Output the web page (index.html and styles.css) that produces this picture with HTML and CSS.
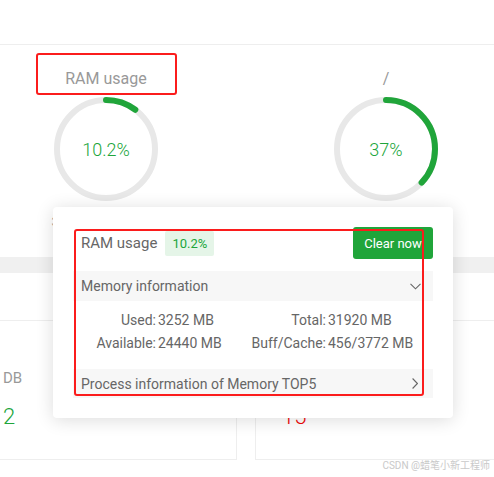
FILE: index.html
```html
<!DOCTYPE html>
<html lang="en">
<head>
<meta charset="utf-8">
<title>RAM usage</title>
<link rel="stylesheet" href="styles.css">
</head>
<body>
<div class="page">
  <div class="topbar"></div>

  <section class="gauges">
    <div class="gauge">
      <div class="gauge-title gauge-title--marked">RAM usage</div>
      <div class="ring">
        <svg class="ring-svg" width="104" height="104" viewBox="0 0 104 104">
          <circle cx="52" cy="52" r="49" fill="none" stroke="#e8e8e8" stroke-width="6"/>
          <circle cx="52" cy="52" r="49" fill="none" stroke="#20a53a" stroke-width="6" stroke-linecap="round" stroke-dasharray="31.4 400" transform="rotate(-90 52 52)"/>
        </svg>
        <span class="ring-value">10.2%</span>
      </div>
      <div class="gauge-sub">3252 / 31920 (MB)</div>
    </div>
    <div class="gauge">
      <div class="gauge-title">/</div>
      <div class="ring">
        <svg class="ring-svg" width="104" height="104" viewBox="0 0 104 104">
          <circle cx="52" cy="52" r="49" fill="none" stroke="#e8e8e8" stroke-width="6"/>
          <circle cx="52" cy="52" r="49" fill="none" stroke="#20a53a" stroke-width="6" stroke-linecap="round" stroke-dasharray="113.9 400" transform="rotate(-90 52 52)"/>
        </svg>
        <span class="ring-value">37%</span>
      </div>
    </div>
  </section>

  <div class="band"></div>
  <div class="tabs-space"></div>

  <section class="cards">
    <div class="card card--left">
      <div class="card-label">DB</div>
      <div class="card-num card-num--green">2</div>
    </div>
    <div class="card card--right">
      <div class="card-label">&nbsp;</div>
      <div class="card-num card-num--red">15</div>
    </div>
  </section>

  <div class="popover">
    <div class="pop-head">
      <div class="pop-title">RAM usage <span class="badge">10.2%</span></div>
      <button class="btn-clear" type="button">Clear now</button>
    </div>
    <div class="pop-sec pop-sec--mem">
      <span>Memory information</span>
      <svg class="chev-down" width="11" height="7" viewBox="0 0 11 7"><path d="M0.5 0.8 L5.5 5.8 L10.5 0.8" fill="none" stroke="#666" stroke-width="1.1"/></svg>
    </div>
    <div class="mem-grid">
      <span class="k">Used:</span><span class="v">3252 MB</span>
      <span class="k">Total:</span><span class="v">31920 MB</span>
      <span class="k">Available:</span><span class="v">24440 MB</span>
      <span class="k">Buff/Cache:</span><span class="v">456/3772 MB</span>
    </div>
    <div class="pop-sec pop-sec--proc">
      <span>Process information of Memory TOP5</span>
      <svg class="chev-right" width="6" height="11" viewBox="0 0 6 11"><path d="M0.6 0.5 L5.4 5.5 L0.6 10.5" fill="none" stroke="#666" stroke-width="1.1"/></svg>
    </div>
    <div class="mark mark--pop"></div>
  </div>

  <div class="watermark">CSDN @蜡笔小新工程师</div>
</div>
</body>
</html>
```

FILE: styles.css
```css
* {
  box-sizing: border-box;
}

body {
  margin: 0;
  background: #fff;
  color: #666;
  font-family: Roboto, "Liberation Sans", "Noto Sans CJK SC", sans-serif;
}

.page {
  position: relative;
  width: 494px;
  height: 477px;
  overflow: hidden;
}

.topbar {
  height: 45px;
  border-bottom: 1px solid #eee;
}

.gauges {
  display: flex;
  gap: 138px;
  padding-left: 35px;
  height: 212px;
}

.gauge {
  width: 142px;
  display: flex;
  flex-direction: column;
  align-items: center;
  padding-top: 8px;
}

.gauge-title {
  width: 141px;
  height: 42px;
  display: flex;
  align-items: flex-end;
  justify-content: center;
  padding-bottom: 4px;
  border: 2px solid transparent;
  border-radius: 3px;
  font-size: 16px;
  line-height: 20px;
  color: #999;
}

.gauge-title--marked {
  border-color: #fb1c1c;
}

.ring {
  display: grid;
  width: 104px;
  height: 104px;
  margin-top: 2px;
}

.ring > * {
  grid-area: 1 / 1;
}

.ring-svg {
  display: block;
}

.ring-value {
  place-self: center;
  font-size: 18px;
  font-weight: 300;
  color: #20a53a;
}

.gauge-sub {
  margin-top: 11px;
  font-size: 13px;
  line-height: 20px;
  color: #999;
  white-space: nowrap;
}

.band {
  height: 16px;
  background: #f0f0f0;
}

.tabs-space {
  height: 47px;
}

.cards {
  display: flex;
  gap: 18px;
  height: 140px;
}

.card {
  border: 1px solid #eee;
  padding-top: 47px;
}

.card--left {
  width: 237px;
  border-left: none;
  padding-left: 3px;
}

.card--right {
  flex: 1;
  border-right: none;
  padding-left: 26px;
}

.card-label {
  font-size: 15px;
  line-height: 20px;
  color: #999;
}

.card-num {
  margin-top: 14px;
  font-size: 22px;
  font-weight: 300;
  line-height: 30px;
}

.card-num--green {
  color: #20a53a;
}

.card-num--red {
  color: #ef0808;
}

.popover {
  position: absolute;
  left: 53px;
  top: 207px;
  width: 400px;
  padding: 20px;
  background: #fff;
  border-radius: 4px;
  box-shadow: 0 2px 18px rgba(0, 0, 0, 0.14);
}

.pop-head {
  display: flex;
  align-items: center;
  justify-content: space-between;
  height: 32px;
  padding-left: 8px;
}

.pop-title {
  display: flex;
  align-items: center;
  gap: 8px;
  font-size: 15px;
  color: #666;
}

.badge {
  height: 25px;
  line-height: 25px;
  padding: 0 7px;
  border-radius: 2px;
  background: #e5f5e8;
  color: #20a53a;
  font-size: 13px;
}

.btn-clear {
  width: 80px;
  height: 32px;
  border: none;
  border-radius: 3px;
  background: #20a53a;
  color: #fff;
  font-family: inherit;
  font-size: 13px;
  padding: 0;
}

.pop-sec {
  display: flex;
  align-items: center;
  justify-content: space-between;
  height: 30px;
  padding: 0 12px 0 8px;
  background: #f7f7f7;
  font-size: 14px;
  color: #666;
}

.pop-sec--mem {
  margin-top: 12px;
}

.pop-sec--proc {
  height: 29px;
}

.chev-right {
  margin-right: 3px;
}

.mem-grid {
  display: grid;
  grid-template-columns: 83px 83px 83px 1fr;
  column-gap: 2px;
  padding: 8px 0 14px;
  font-size: 14px;
  line-height: 23px;
  color: #666;
  white-space: nowrap;
}

.k {
  text-align: right;
}

.mark {
  position: absolute;
  border: 2px solid #fb1c1c;
  border-radius: 3px;
  pointer-events: none;
}

.mark--pop {
  left: 21px;
  top: 22px;
  width: 350px;
  height: 167px;
}

.watermark {
  position: absolute;
  right: 4px;
  top: 459px;
  font-size: 10px;
  line-height: 13px;
  color: #c9c9c9;
}
```
